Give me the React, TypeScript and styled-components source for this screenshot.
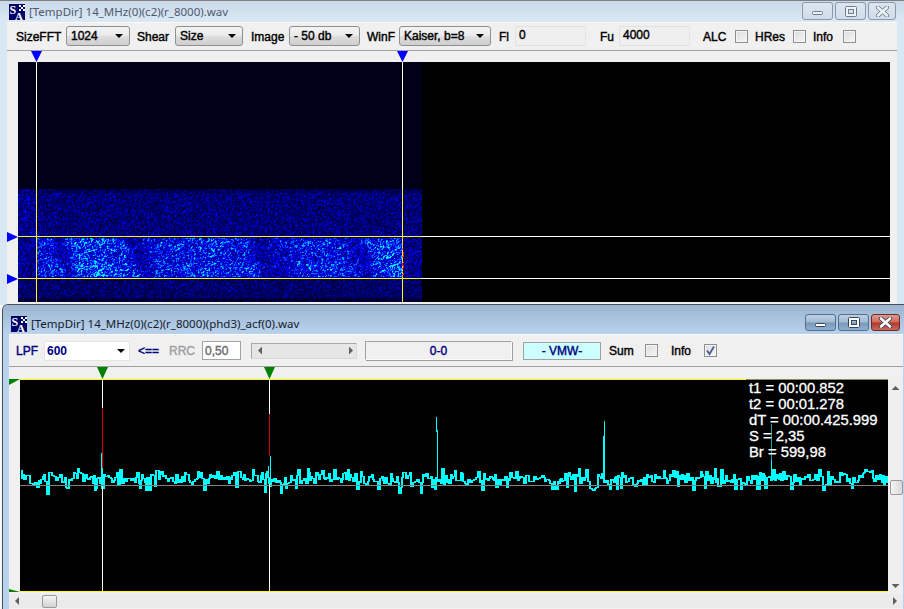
import { useEffect, useRef } from 'react';
import styled, { createGlobalStyle } from 'styled-components';

const rng = (seed: number) => () => {
  seed = (seed + 0x6d2b79f5) | 0;
  let t = Math.imul(seed ^ (seed >>> 15), 1 | seed);
  t = (t + Math.imul(t ^ (t >>> 7), 61 | t)) ^ t;
  return ((t ^ (t >>> 14)) >>> 0) / 4294967296;
};

// burst loudness along the time axis of the spectrogram
const envelope = [
  [37, 0.42], [55, 0.45], [62, 0.14], [67, 0.18], [75, 0.55], [90, 0.6], [130, 0.42], [136, 0.1],
  [145, 0.12], [155, 0.36], [200, 0.46], [250, 0.4], [256, 0.14], [270, 0.08], [285, 0.28],
  [310, 0.4], [340, 0.4], [356, 0.2], [362, 0.12], [372, 0.45], [385, 0.52], [402, 0.6],
];

const burstAt = (x: number) => {
  if (x <= envelope[0][0]) return envelope[0][1];
  for (let i = 1; i < envelope.length; i++) {
    const [x0, v0] = envelope[i - 1];
    const [x1, v1] = envelope[i];
    if (x <= x1) return v0 + ((v1 - v0) * (x - x0)) / (x1 - x0);
  }
  return 0.6;
};

const W = 872;
const H = 240;
const LEFT = 18;
const TOP = 62;

const Spectrogram = () => {
  const ref = useRef<HTMLCanvasElement>(null);

  useEffect(() => {
    const ctx = ref.current?.getContext('2d');
    if (!ctx) return;
    const img = ctx.createImageData(W, H);
    const rand = rng(7);
    const raw = new Float32Array((W + 1) * (H + 1)).map(() => rand());
    for (let py = 0; py < H; py++) {
      for (let px = 0; px < W; px++) {
        const x = px + LEFT;
        const y = py + TOP;
        let r = 0;
        let g = 0;
        let b = 0;
        if (x < 422) {
          b = 24;
          if (y >= 189) {
            const at = py * (W + 1) + px;
            const n = (raw[at] * 2 + raw[at + 1] + raw[at + W + 1]) / 4;
            let base = 0.22;
            if (y >= 237 && y < 278) base = 0.25;
            if (y >= 278) base = 0.19;
            if (y < 193) base = 0.15;
            if (y >= 298) base = 0.1;
            if (x < 36 && y < 237) base += 0.04;
            let v = base * (0.55 + 1.9 * n * n);
            if (y >= 238 && y < 277 && x >= 37 && x <= 402) {
              const profile = y > 262 ? 1 : y < 250 ? 0.88 : 0.8;
              const blobs = 0.85 + 0.15 * Math.sin(x * 0.31 + y * 0.47);
              const e = burstAt(x + (y - 257) * -0.35) * profile * blobs * 0.9;
              v += e * (0.35 + 1.6 * n * n);
            }
            v = Math.min(1, v);
            if (v < 0.5) b = Math.max(35, v * 510);
            else {
              b = 255;
              g = (v - 0.5) * 510;
            }
          }
        }
        // the cursors are xor-ed onto the picture
        const onV = x === 36 || x === 402;
        const onH = y === 236 || y === 278;
        if (onV || onH) {
          r = 255 - r;
          g = 255 - g;
          b = y >= 189 && x < 422 ? 0 : 255 - b;
        }
        if (x === 403 && y > 250 && y < 276 && rand() > 0.5) {
          r = 230;
          g = 20;
          b = 30;
        }
        const i = (py * W + px) * 4;
        img.data[i] = r;
        img.data[i + 1] = g;
        img.data[i + 2] = b;
        img.data[i + 3] = 255;
      }
    }
    ctx.putImageData(img, 0, 0);
  }, []);

  return <SpectrumCanvas ref={ref} width={W} height={H} />;
};

const buildTrace = (seed: number) => {
  const rand = rng(seed);
  let d = 'M21.5 469.5';
  let x = 21;
  while (x < 887) {
    const kind = rand();
    const swell = 2 * Math.sin(x * 0.23) + 1.5 * Math.sin(x * 0.071);
    let y = 483 - Math.pow(rand(), 1.1) * 10 + swell;
    if (kind > 0.94) y = 468 + rand() * 5;
    if (kind < 0.1) y = 486 + rand() * 4;
    if (kind < 0.025) y = 490 + rand() * 7;
    x += rand() > 0.45 ? 1 : 2;
    d += `V${Math.round(y) + 0.5}H${Math.min(x, 887) + 0.5}`;
  }
  return d;
};

const peaks = [
  [101, 453, 485], [102, 468, 485], [268, 466, 484], [270, 456, 482],
  [436, 417, 432], [437, 430, 478], [604, 421, 474], [603, 436, 476], [771, 460, 478],
];

const AcfPlot = () => {
  const trace = buildTrace(41);
  return (
    <PlotSvg viewBox="20 380 868 211" shapeRendering="crispEdges">
      <path d={trace} fill="none" stroke="#00ffff" />
      <path d={trace} fill="none" stroke="#00ffff" transform="translate(1 0)" />
      <line x1={20} x2={888} y1={485.5} y2={485.5} stroke="#808080" />
      {peaks.map(([x, y0, y1]) => (
        <line key={x} x1={x + 0.5} x2={x + 0.5} y1={y0} y2={y1} stroke="#00ffff" />
      ))}
      <line x1={771.5} x2={771.5} y1={424} y2={460} stroke="#1a9c9c" />
      <line x1={102.5} x2={102.5} y1={380} y2={408} stroke="#fff" />
      <line x1={102.5} x2={102.5} y1={408} y2={468} stroke="#e00000" />
      <line x1={102.5} x2={102.5} y1={486} y2={591} stroke="#fff" />
      <line x1={269.5} x2={269.5} y1={380} y2={414} stroke="#fff" />
      <line x1={269.5} x2={269.5} y1={414} y2={456} stroke="#c80000" />
      <line x1={269.5} x2={269.5} y1={484} y2={591} stroke="#fff" />
    </PlotSvg>
  );
};

const AppIcon = () => (
  <svg width="16" height="16" viewBox="0 0 16 16">
    <rect width="16" height="16" fill="#00006a" />
    <path
      d="M10 1h2v2h-2zM12 3h2v2h-2zM14 1h2v2h-2zM10 5h2v2h-2zM14 5h2v2h-2z"
      fill="#fff"
    />
    <text x="0.5" y="10" fontFamily="Liberation Serif, serif" fontWeight="700" fontSize="12" fill="#fff">
      S
    </text>
    <text x="6" y="15.5" fontFamily="Liberation Serif, serif" fontWeight="700" fontSize="11" fill="#fff">
      A
    </text>
  </svg>
);

const Controls = ({ active }: { active?: boolean }) => {
  const ink = active ? '#fff' : '#eef2f6';
  const edge = active ? '#33465c' : '#6f7c8a';
  return (
    <ControlGroup $active={active}>
      <ControlButton $active={active} $w={31}>
        <svg width="14" height="10" viewBox="0 0 14 10">
          <rect x="1.5" y="5.5" width="10" height="3" rx="1" fill={ink} stroke={edge} />
        </svg>
      </ControlButton>
      <ControlButton $active={active} $w={31}>
        <svg width="14" height="11" viewBox="0 0 14 11">
          <rect x="2.5" y="1.5" width="9" height="8" rx="1" fill="none" stroke={ink} strokeWidth="3" />
          <rect x="1.5" y="0.5" width="11" height="10" rx="1" fill="none" stroke={edge} />
          <rect x="4.5" y="3.5" width="5" height="4" fill="none" stroke={edge} />
        </svg>
      </ControlButton>
      <ControlButton $active={active} $close={active} $w={active ? 29 : 28}>
        <svg width="15" height="11" viewBox="0 0 15 11">
          <path d="M3 1.5l9 8M12 1.5l-9 8" stroke={edge} strokeWidth="4.2" strokeLinecap="round" />
          <path d="M3 1.5l9 8M12 1.5l-9 8" stroke={ink} strokeWidth="2.6" strokeLinecap="round" />
        </svg>
      </ControlButton>
    </ControlGroup>
  );
};

const App = () => {
  return (
    <Desktop>
      <GlobalStyle />
      <Win $left={0} $top={0} $height={305}>
        <TitleBar $height={22}>
          <AppIcon />
          <TitleText>[TempDir] 14_MHz(0)(c2)(r_8000).wav</TitleText>
          <Controls />
        </TitleBar>
        <Client $side={7}>
          <Toolbar $height={29}>
            <Label $w={46} $ml={9}>SizeFFT</Label>
            <Combo $w={64} $ml={4}><span>1024</span><Caret /></Combo>
            <Label $w={33} $ml={7}>Shear</Label>
            <Combo $w={68} $ml={5}><span>Size</span><Caret /></Combo>
            <Label $w={34} $ml={8}>Image</Label>
            <Combo $w={71} $ml={4}><span>- 50 db</span><Caret /></Combo>
            <Label $w={29} $ml={7}>WinF</Label>
            <Combo $w={92} $ml={3}><span>Kaiser, b=8</span><Caret /></Combo>
            <Label $w={10} $ml={8}>Fl</Label>
            <Field $w={71} $ml={6}>0</Field>
            <Label $w={13} $ml={14}>Fu</Label>
            <Field $w={71} $ml={6}>4000</Field>
            <Label $w={24} $ml={13}>ALC</Label>
            <Check $ml={8} />
            <Label $w={31} $ml={7}>HRes</Label>
            <Check $ml={7} />
            <Label $w={22} $ml={7}>Info</Label>
            <Check $ml={8} />
          </Toolbar>
          <TopBody>
            <Spectrogram />
            <Marker $x={24} $y={0} $w={11} $h={11} $color="#0000ff" $shape="down" />
            <Marker $x={390} $y={0} $w={11} $h={11} $color="#0000ff" $shape="down" />
            <Marker $x={0} $y={181} $w={11} $h={10} $color="#0000ff" $shape="right" />
            <Marker $x={0} $y={223} $w={11} $h={10} $color="#0000ff" $shape="right" />
          </TopBody>
        </Client>
      </Win>

      <Win $left={2} $top={304} $height={305} $active>
        <TitleBar $height={29} $active>
          <AppIcon />
          <TitleText $active>[TempDir] 14_MHz(0)(c2)(r_8000)(phd3)_acf(0).wav</TitleText>
          <Controls active />
        </TitleBar>
        <Client $side={6} $right={1}>
          <Toolbar $height={33}>
            <Label $w={22} $ml={7} $color="#00007f">LPF</Label>
            <FlatCombo $w={86} $ml={6}><span>600</span><Caret /></FlatCombo>
            <Label $w={23} $ml={8} $color="#00007f">&lt;==</Label>
            <Label $w={26} $ml={8} $color="#a0a0a0">RRC</Label>
            <ValueBox $ml={7}>0,50</ValueBox>
            <SliderTrack $ml={10}>
              <Arrow $dir="left" />
              <Arrow $dir="right" />
            </SliderTrack>
            <StatusPanel $ml={8}>0-0</StatusPanel>
            <ModePanel $ml={11}>- VMW-</ModePanel>
            <Label $w={24} $ml={8}>Sum</Label>
            <Check $ml={12} />
            <Label $w={21} $ml={13}>Info</Label>
            <Check $ml={12}>
              <svg width="11" height="11" viewBox="0 0 11 11">
                <path d="M2 5.5l2.5 3.5L9 1.5" fill="none" stroke="#4a5f9a" strokeWidth="1.8" />
              </svg>
            </Check>
          </Toolbar>
          <BottomBody>
            <PlotRow>
              <Plot>
                <AcfPlot />
                <Readout>
                  <div>t1 = 00:00.852</div>
                  <div>t2 = 00:01.278</div>
                  <div>dT = 00:00.425.999</div>
                  <div>S = 2,35</div>
                  <div>Br = 599,98</div>
                </Readout>
              </Plot>
              <VBar>
                <Arrow $dir="up" />
                <VThumb />
                <Arrow $dir="down" />
              </VBar>
            </PlotRow>
            <HBar>
              <Arrow $dir="left" />
              <HThumb />
              <Arrow $dir="right" />
            </HBar>
            <Marker $x={88} $y={0} $w={11} $h={12} $color="#008000" $shape="down" />
            <Marker $x={255} $y={0} $w={11} $h={12} $color="#008000" $shape="down" />
            <Marker $x={0} $y={12} $w={11} $h={6} $color="#008000" $shape="cornerTop" />
            <Marker $x={0} $y={222} $w={11} $h={3} $color="#008000" $shape="cornerBottom" />
          </BottomBody>
        </Client>
      </Win>
    </Desktop>
  );
};

export default App;

const GlobalStyle = createGlobalStyle`
  * {
    box-sizing: border-box;
  }
  html, body {
    margin: 0;
    padding: 0;
    background: #fff;
  }
`;

const Desktop = styled.div`
  position: relative;
  width: 904px;
  height: 609px;
  overflow: hidden;
  background: #f4f7fb;
  font-family: 'Liberation Sans', Arial, sans-serif;
`;

// windows sit on a free desktop, the second one overlaps the first
const Win = styled.div<{ $left: number; $top: number; $height: number; $active?: boolean }>`
  position: absolute;
  left: ${(p) => p.$left}px;
  top: ${(p) => p.$top}px;
  right: 0;
  height: ${(p) => p.$height}px;
  display: flex;
  flex-direction: column;
  overflow: hidden;
  background: ${(p) => (p.$active ? '#b9d3ee' : '#d9e7f4')};
  border-top: 1px solid ${(p) => (p.$active ? '#4a4f55' : '#7d8083')};
  border-left: ${(p) => (p.$active ? '1px solid #4a4f55' : 'none')};
  border-top-left-radius: ${(p) => (p.$active ? '6px' : '0')};
`;

const TitleBar = styled.div<{ $height: number; $active?: boolean }>`
  display: flex;
  align-items: center;
  flex: none;
  height: ${(p) => p.$height - (p.$active ? 0 : 1)}px;
  padding-left: ${(p) => (p.$active ? 8 : 9)}px;
  padding-top: ${(p) => (p.$active ? 8 : 0)}px;
  gap: 4px;
  background: ${(p) =>
    p.$active
      ? 'linear-gradient(#9bb5d1, #b9d2ec)'
      : 'linear-gradient(#c9d9e9, #dce9f5)'};
`;

const TitleText = styled.span<{ $active?: boolean }>`
  font-family: 'Noto Sans', sans-serif;
  font-size: 11.5px;
  white-space: nowrap;
  color: ${(p) => (p.$active ? '#14202e' : '#4e5a70')};
`;

const ControlGroup = styled.div<{ $active?: boolean }>`
  display: flex;
  align-items: flex-start;
  align-self: flex-start;
  gap: 2px;
  margin-left: auto;
  margin-top: 1px;
  padding-right: ${(p) => (p.$active ? 4 : 8)}px;
`;

const ControlButton = styled.div<{ $active?: boolean; $close?: boolean; $w: number }>`
  display: flex;
  align-items: center;
  justify-content: center;
  width: ${(p) => p.$w}px;
  height: ${(p) => (p.$active ? 17 : 18)}px;
  border: 1px solid ${(p) => (p.$close ? '#6e2a24' : p.$active ? '#54708f' : '#8d98a4')};
  border-radius: 3px;
  background: ${(p) =>
    p.$close
      ? 'linear-gradient(#de9a90 0%, #cf6b5e 45%, #b23a2c 55%, #c9695a 100%)'
      : p.$active
      ? 'linear-gradient(#bcd0e4 0%, #a2bad3 45%, #7c9abb 55%, #8fb0d0 100%)'
      : 'linear-gradient(#dce6f0, #cfdce9)'};
`;

const Client = styled.div<{ $side: number; $right?: number }>`
  flex: 1;
  display: flex;
  flex-direction: column;
  margin-left: ${(p) => p.$side}px;
  margin-right: ${(p) => p.$right ?? p.$side}px;
  background: #f0f0f0;
`;

const Toolbar = styled.div<{ $height: number }>`
  display: flex;
  align-items: center;
  flex: none;
  height: ${(p) => p.$height}px;
  border-top: 1px solid #fafafa;
  border-bottom: 1px solid #a0a0a0;
`;

const Label = styled.span<{ $w: number; $ml: number; $color?: string }>`
  flex: none;
  width: ${(p) => p.$w}px;
  margin-left: ${(p) => p.$ml}px;
  font-size: 12px;
  white-space: nowrap;
  color: ${(p) => p.$color ?? '#000'};
  -webkit-text-stroke: 0.4px currentColor;
`;

const Combo = styled.div<{ $w: number; $ml: number }>`
  flex: none;
  display: flex;
  align-items: center;
  justify-content: space-between;
  width: ${(p) => p.$w}px;
  height: 20px;
  margin-left: ${(p) => p.$ml}px;
  margin-bottom: 2px;
  padding: 0 6px 0 4px;
  border: 1px solid #8e8f8f;
  border-radius: 3px;
  background: linear-gradient(#f3f3f3 0%, #ececec 45%, #dcdcdc 55%, #cfcfcf 100%);
  font-size: 12px;
  white-space: nowrap;
  color: #000;
  -webkit-text-stroke: 0.4px currentColor;
`;

const FlatCombo = styled(Combo)`
  margin-bottom: 0;
  padding: 0 4px 0 2px;
  border: 1px solid #e4e4e4;
  border-radius: 0;
  background: #fff;
  color: #00007f;
  font-weight: 700;
  -webkit-text-stroke: 0;
`;

const Caret = styled.i`
  flex: none;
  width: 0;
  height: 0;
  border-left: 4px solid transparent;
  border-right: 4px solid transparent;
  border-top: 4px solid #000;
`;

const Field = styled.div<{ $w: number; $ml: number }>`
  flex: none;
  width: ${(p) => p.$w}px;
  height: 20px;
  margin-left: ${(p) => p.$ml}px;
  margin-bottom: 2px;
  padding-left: 3px;
  border: 1px solid #e2e2e2;
  background: #efefef;
  font-size: 12px;
  line-height: 17px;
  -webkit-text-stroke: 0.4px currentColor;
`;

const Check = styled.div<{ $ml: number }>`
  flex: none;
  display: flex;
  align-items: center;
  justify-content: center;
  width: 13px;
  height: 13px;
  margin-left: ${(p) => p.$ml}px;
  border: 1px solid #8e8f8f;
  background: linear-gradient(135deg, #dcdcdc, #f6f6f6);
  box-shadow: inset 0 0 0 1px #f4f4f4;
`;

const ValueBox = styled.div<{ $ml: number }>`
  flex: none;
  width: 39px;
  height: 19px;
  margin-left: ${(p) => p.$ml}px;
  padding-left: 2px;
  border: 1px solid #a3a3a3;
  background: #fff;
  color: #6d6d6d;
  font-size: 12px;
  line-height: 18px;
  -webkit-text-stroke: 0.4px currentColor;
`;

const SliderTrack = styled.div<{ $ml: number }>`
  flex: none;
  display: flex;
  align-items: center;
  justify-content: space-between;
  width: 106px;
  height: 16px;
  margin-left: ${(p) => p.$ml}px;
  padding: 0 3px 0 6px;
  border: 1px solid #d8d8d8;
  border-top-color: #a8a8a8;
  border-left-color: #a8a8a8;
  background: #e6e6e6;
`;

const StatusPanel = styled.div<{ $ml: number }>`
  flex: none;
  width: 147px;
  height: 19px;
  margin-left: ${(p) => p.$ml}px;
  border: 1px solid #fbfbfb;
  border-top-color: #a0a0a0;
  border-left-color: #a0a0a0;
  box-shadow: 1px 1px 0 #a0a0a0;
  color: #00007f;
  font-size: 12px;
  line-height: 18px;
  text-align: center;
  -webkit-text-stroke: 0.4px currentColor;
`;

const ModePanel = styled.div<{ $ml: number }>`
  flex: none;
  width: 78px;
  height: 18px;
  margin-left: ${(p) => p.$ml}px;
  border: 1px solid #a0a0a0;
  background: #ccffff;
  color: #00007f;
  font-size: 12px;
  line-height: 16px;
  text-align: center;
  -webkit-text-stroke: 0.4px currentColor;
`;

const TopBody = styled.div`
  position: relative;
  flex: 1;
  padding: 11px 0 0 11px;
`;

const SpectrumCanvas = styled.canvas`
  display: block;
  width: 872px;
  height: 240px;
`;

const Marker = styled.i<{
  $x: number;
  $y: number;
  $w: number;
  $h: number;
  $color: string;
  $shape: 'down' | 'right' | 'cornerTop' | 'cornerBottom';
}>`
  position: absolute;
  left: ${(p) => p.$x}px;
  top: ${(p) => p.$y}px;
  width: ${(p) => p.$w}px;
  height: ${(p) => p.$h}px;
  background: ${(p) => p.$color};
  clip-path: ${(p) =>
    ({
      down: 'polygon(0 0, 100% 0, 50% 100%)',
      right: 'polygon(0 0, 100% 50%, 0 100%)',
      cornerTop: 'polygon(0 0, 100% 0, 0 100%)',
      cornerBottom: 'polygon(0 0, 100% 100%, 0 100%)',
    })[p.$shape]};
`;

const BottomBody = styled.div`
  position: relative;
  flex: 1;
  display: flex;
  flex-direction: column;
`;

const PlotRow = styled.div`
  display: flex;
  padding: 12px 0 0 11px;
`;

const Plot = styled.div`
  position: relative;
  flex: none;
  width: 868px;
  height: 213px;
  background: #000;
  border-top: 1px solid #ffff00;
  border-bottom: 1px solid #ffff00;
`;

const PlotSvg = styled.svg`
  display: block;
  width: 868px;
  height: 211px;
`;

const Readout = styled.div`
  position: absolute;
  top: -1px;
  right: 0;
  width: 142px;
  padding-left: 3px;
  border-top: 1px solid #8c8c5a;
  color: #fff;
  font-size: 14.8px;
  line-height: 16px;
  white-space: nowrap;
  -webkit-text-stroke: 0.3px currentColor;
`;

const VBar = styled.div`
  flex: 1;
  display: flex;
  flex-direction: column;
  align-items: center;
  padding: 7px 0 4px;
  background: #efefef;
  > i:first-child {
    margin-bottom: 90px;
  }
  > i:last-child {
    margin-top: auto;
  }
`;

const VThumb = styled.div`
  width: 13px;
  height: 15px;
  margin-left: 1px;
  border: 1px solid #9a9a9a;
  border-radius: 2px;
  background: linear-gradient(90deg, #f4f4f4, #d8d8d8);
`;

const HBar = styled.div`
  display: flex;
  align-items: center;
  flex: none;
  height: 14px;
  margin-top: 2px;
  padding: 0 6px;
  background: #ebebeb;
  > i:last-child {
    margin-left: auto;
  }
`;

const HThumb = styled.div`
  width: 15px;
  height: 13px;
  margin-left: 23px;
  border: 1px solid #9a9a9a;
  border-radius: 2px;
  background: linear-gradient(#f4f4f4, #d4d4d4);
`;

const Arrow = styled.i<{ $dir: 'left' | 'right' | 'up' | 'down' }>`
  flex: none;
  display: block;
  width: ${(p) => (p.$dir === 'left' || p.$dir === 'right' ? 4 : 8)}px;
  height: ${(p) => (p.$dir === 'left' || p.$dir === 'right' ? 8 : 4)}px;
  background: #606060;
  clip-path: ${(p) =>
    ({
      left: 'polygon(100% 0, 100% 100%, 0 50%)',
      right: 'polygon(0 0, 100% 50%, 0 100%)',
      up: 'polygon(50% 0, 100% 100%, 0 100%)',
      down: 'polygon(0 0, 100% 0, 50% 100%)',
    })[p.$dir]};
`;
